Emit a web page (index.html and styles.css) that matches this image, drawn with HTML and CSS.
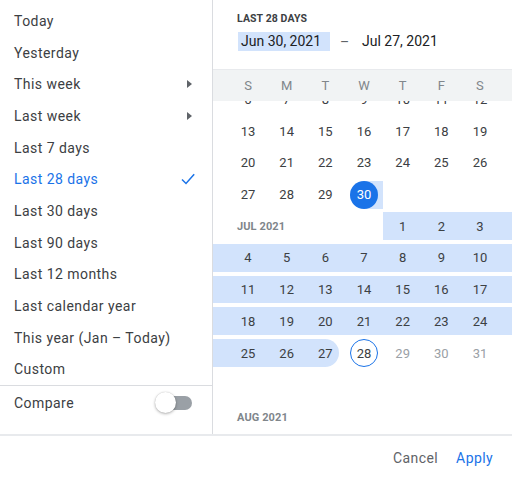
FILE: index.html
```html
<!DOCTYPE html>
<html lang="en">
<head>
<meta charset="utf-8">
<title>Date range picker</title>
<link rel="stylesheet" href="styles.css">
</head>
<body>
<div class="picker">
  <div class="main">
    <aside class="sidebar">
      <ul class="presets">
        <li class="preset">Today</li>
        <li class="preset">Yesterday</li>
        <li class="preset">This week <svg class="arrow" viewBox="0 0 5 8" width="5" height="8"><polygon points="0,0 5,4 0,8" /></svg></li>
        <li class="preset">Last week <svg class="arrow" viewBox="0 0 5 8" width="5" height="8"><polygon points="0,0 5,4 0,8" /></svg></li>
        <li class="preset">Last 7 days</li>
        <li class="preset active">Last 28 days <svg class="check" viewBox="0 0 14 12" width="14" height="12"><polyline points="1,6.5 5,10.5 13.2,1.2" /></svg></li>
        <li class="preset">Last 30 days</li>
        <li class="preset">Last 90 days</li>
        <li class="preset">Last 12 months</li>
        <li class="preset">Last calendar year</li>
        <li class="preset">This year (Jan – Today)</li>
        <li class="preset">Custom</li>
      </ul>
      <div class="compare">
        <span>Compare</span>
        <span class="toggle"><span class="track"></span><span class="thumb"></span></span>
      </div>
    </aside>
    <section class="cal">
      <div class="cal-top">
        <div class="range-label">LAST 28 DAYS</div>
        <div class="range-inputs">
          <span class="date-field focused">Jun 30, 2021</span>
          <span class="dash">–</span>
          <span class="date-field">Jul 27, 2021</span>
        </div>
      </div>
      <div class="weekdays">
        <span class="pad"></span>
        <span>S</span><span>M</span><span>T</span><span>W</span><span>T</span><span>F</span><span>S</span>
        <span class="pad"></span>
      </div>
      <div class="cal-body">
        <div class="cal-scroll">
          <div class="week">
            <span class="pad"></span>
            <span class="day"><span class="num">6</span></span>
            <span class="day"><span class="num">7</span></span>
            <span class="day"><span class="num">8</span></span>
            <span class="day"><span class="num">9</span></span>
            <span class="day"><span class="num">10</span></span>
            <span class="day"><span class="num">11</span></span>
            <span class="day"><span class="num">12</span></span>
            <span class="pad"></span>
          </div>
          <div class="week">
            <span class="pad"></span>
            <span class="day"><span class="num">13</span></span>
            <span class="day"><span class="num">14</span></span>
            <span class="day"><span class="num">15</span></span>
            <span class="day"><span class="num">16</span></span>
            <span class="day"><span class="num">17</span></span>
            <span class="day"><span class="num">18</span></span>
            <span class="day"><span class="num">19</span></span>
            <span class="pad"></span>
          </div>
          <div class="week">
            <span class="pad"></span>
            <span class="day"><span class="num">20</span></span>
            <span class="day"><span class="num">21</span></span>
            <span class="day"><span class="num">22</span></span>
            <span class="day"><span class="num">23</span></span>
            <span class="day"><span class="num">24</span></span>
            <span class="day"><span class="num">25</span></span>
            <span class="day"><span class="num">26</span></span>
            <span class="pad"></span>
          </div>
          <div class="week">
            <span class="pad"></span>
            <span class="day"><span class="num">27</span></span>
            <span class="day"><span class="num">28</span></span>
            <span class="day"><span class="num">29</span></span>
            <span class="day start"><span class="num">30</span></span>
            <span class="day"></span>
            <span class="day"></span>
            <span class="day"></span>
            <span class="pad"></span>
          </div>
          <div class="week">
            <span class="month-label">JUL 2021</span>
            <span class="day in"><span class="num">1</span></span>
            <span class="day in"><span class="num">2</span></span>
            <span class="day in"><span class="num">3</span></span>
            <span class="pad in"></span>
          </div>
          <div class="week in">
            <span class="pad"></span>
            <span class="day"><span class="num">4</span></span>
            <span class="day"><span class="num">5</span></span>
            <span class="day"><span class="num">6</span></span>
            <span class="day"><span class="num">7</span></span>
            <span class="day"><span class="num">8</span></span>
            <span class="day"><span class="num">9</span></span>
            <span class="day"><span class="num">10</span></span>
            <span class="pad"></span>
          </div>
          <div class="week in">
            <span class="pad"></span>
            <span class="day"><span class="num">11</span></span>
            <span class="day"><span class="num">12</span></span>
            <span class="day"><span class="num">13</span></span>
            <span class="day"><span class="num">14</span></span>
            <span class="day"><span class="num">15</span></span>
            <span class="day"><span class="num">16</span></span>
            <span class="day"><span class="num">17</span></span>
            <span class="pad"></span>
          </div>
          <div class="week in">
            <span class="pad"></span>
            <span class="day"><span class="num">18</span></span>
            <span class="day"><span class="num">19</span></span>
            <span class="day"><span class="num">20</span></span>
            <span class="day"><span class="num">21</span></span>
            <span class="day"><span class="num">22</span></span>
            <span class="day"><span class="num">23</span></span>
            <span class="day"><span class="num">24</span></span>
            <span class="pad"></span>
          </div>
          <div class="week">
            <span class="pad in"></span>
            <span class="day in"><span class="num">25</span></span>
            <span class="day in"><span class="num">26</span></span>
            <span class="day end"><span class="num">27</span></span>
            <span class="day today"><span class="num">28</span></span>
            <span class="day disabled"><span class="num">29</span></span>
            <span class="day disabled"><span class="num">30</span></span>
            <span class="day disabled"><span class="num">31</span></span>
            <span class="pad"></span>
          </div>
          <div class="month-gap"></div>
          <div class="month-row"><span class="month-label">AUG 2021</span></div>
        </div>
      </div>
    </section>
  </div>
  <footer class="footer">
    <button class="btn cancel" type="button">Cancel</button>
    <button class="btn apply" type="button">Apply</button>
  </footer>
</div>
</body>
</html>
```

FILE: styles.css
```css
* { box-sizing: border-box; }

html, body {
  margin: 0;
  padding: 0;
  background: #fff;
}

body {
  width: 512px;
  height: 479px;
  overflow: hidden;
  font-family: Roboto, "Liberation Sans", sans-serif;
  color: #3c4043;
}

.picker {
  display: flex;
  flex-direction: column;
  height: 479px;
}

.main {
  display: flex;
  height: 436px;
  border-bottom: 2px solid #e8eaed;
}

/* ---------- sidebar ---------- */
.sidebar {
  width: 213px;
  flex: none;
  border-right: 1px solid #dadce0;
  padding-top: 5px;
}

.presets {
  list-style: none;
  margin: 0;
  padding: 0;
  border-bottom: 1px solid #dadce0;
}

.preset {
  height: 31.7px;
  display: flex;
  align-items: center;
  justify-content: space-between;
  padding: 0 20px 0 14px;
  font-size: 14px;
  letter-spacing: 0.45px;
  color: #3c4043;
}

.preset.active {
  color: #1a73e8;
  padding-right: 17px;
}

.arrow polygon { fill: #5f6368; }

.check polyline {
  fill: none;
  stroke: #1a73e8;
  stroke-width: 1.5;
}

.compare {
  height: 33px;
  display: flex;
  align-items: center;
  justify-content: space-between;
  padding: 0 20px 0 14px;
  font-size: 14px;
  letter-spacing: 0.45px;
}

.toggle {
  position: relative;
  width: 37px;
  height: 21px;
  display: flex;
  align-items: center;
  justify-content: flex-end;
}

.track {
  width: 34px;
  height: 14px;
  border-radius: 7px;
  background: #9aa0a6;
}

.thumb {
  position: absolute;
  left: 0;
  top: 0;
  width: 21px;
  height: 21px;
  border-radius: 50%;
  background: #fff;
  box-shadow: 0 1px 3px rgba(0,0,0,0.3), 0 0 1px rgba(0,0,0,0.2);
}

/* ---------- calendar ---------- */
.cal {
  flex: 1;
  display: flex;
  flex-direction: column;
  min-width: 0;
}

.cal-top {
  padding: 12px 0 0 24px;
  height: 69px;
}

.range-label {
  font-size: 10.5px;
  line-height: 14px;
  font-weight: 700;
  color: #3c4043;
  letter-spacing: 0.1px;
}

.range-inputs {
  display: flex;
  align-items: center;
  margin-top: 6px;
  margin-left: 1px;
  height: 19px;
  font-size: 14px;
}

.date-field {
  height: 19px;
  line-height: 19px;
  padding: 0 3px;
  color: #202124;
}

.date-field.focused {
  width: 92px;
  background: #d2e3fc;
}

.dash {
  width: 29px;
  text-align: center;
  color: #5f6368;
}

.weekdays,
.week {
  display: grid;
  grid-template-columns: 15.7px repeat(7, 38.67px) 1fr;
}

.weekdays {
  height: 32px;
  align-items: center;
  background: #f1f3f4;
  border-top: 1px solid #e8eaed;
  font-size: 13px;
  color: #80868b;
  text-align: center;
}

.cal-body {
  flex: 1;
  overflow: hidden;
}

.cal-scroll {
  display: flex;
  flex-direction: column;
  margin-top: -17.5px;
}

.week {
  flex: none;
  height: 27.7px;
  margin: 2px 0;
  font-size: 13px;
  color: #3c4043;
}

.week.in,
.in {
  background: #d2e3fc;
}

.day {
  display: flex;
  align-items: center;
  justify-content: center;
}

.num {
  width: 28px;
  height: 28px;
  border-radius: 50%;
  display: flex;
  align-items: center;
  justify-content: center;
}

.day.start {
  background: linear-gradient(to right, transparent 50%, #d2e3fc 50%);
}

.day.start .num {
  background: #1a73e8;
  color: #fff;
}

.day.end {
  background: linear-gradient(to right, #d2e3fc 50%, transparent 50%);
}

.day.end .num {
  background: #d2e3fc;
}

.day.today .num {
  border: 1px solid #1a73e8;
}

.day.disabled {
  color: #9aa0a6;
}

.month-label {
  grid-column: 1 / 6;
  align-self: center;
  padding-left: 24px;
  font-size: 11px;
  font-weight: 700;
  color: #80868b;
  letter-spacing: 0.1px;
}

.month-gap {
  flex: none;
  height: 33.4px;
}

.month-row {
  flex: none;
  height: 31.7px;
  display: flex;
  align-items: center;
}

/* ---------- footer ---------- */
.footer {
  flex: 1;
  display: flex;
  align-items: center;
  justify-content: flex-end;
  gap: 18px;
  padding-right: 19px;
}

.btn {
  border: 0;
  background: none;
  padding: 0;
  font-family: Roboto, "Liberation Sans", sans-serif;
  font-size: 14px;
  letter-spacing: 0.4px;
  cursor: pointer;
}

.cancel { color: #5f6368; }
.apply { color: #1a73e8; }
```
